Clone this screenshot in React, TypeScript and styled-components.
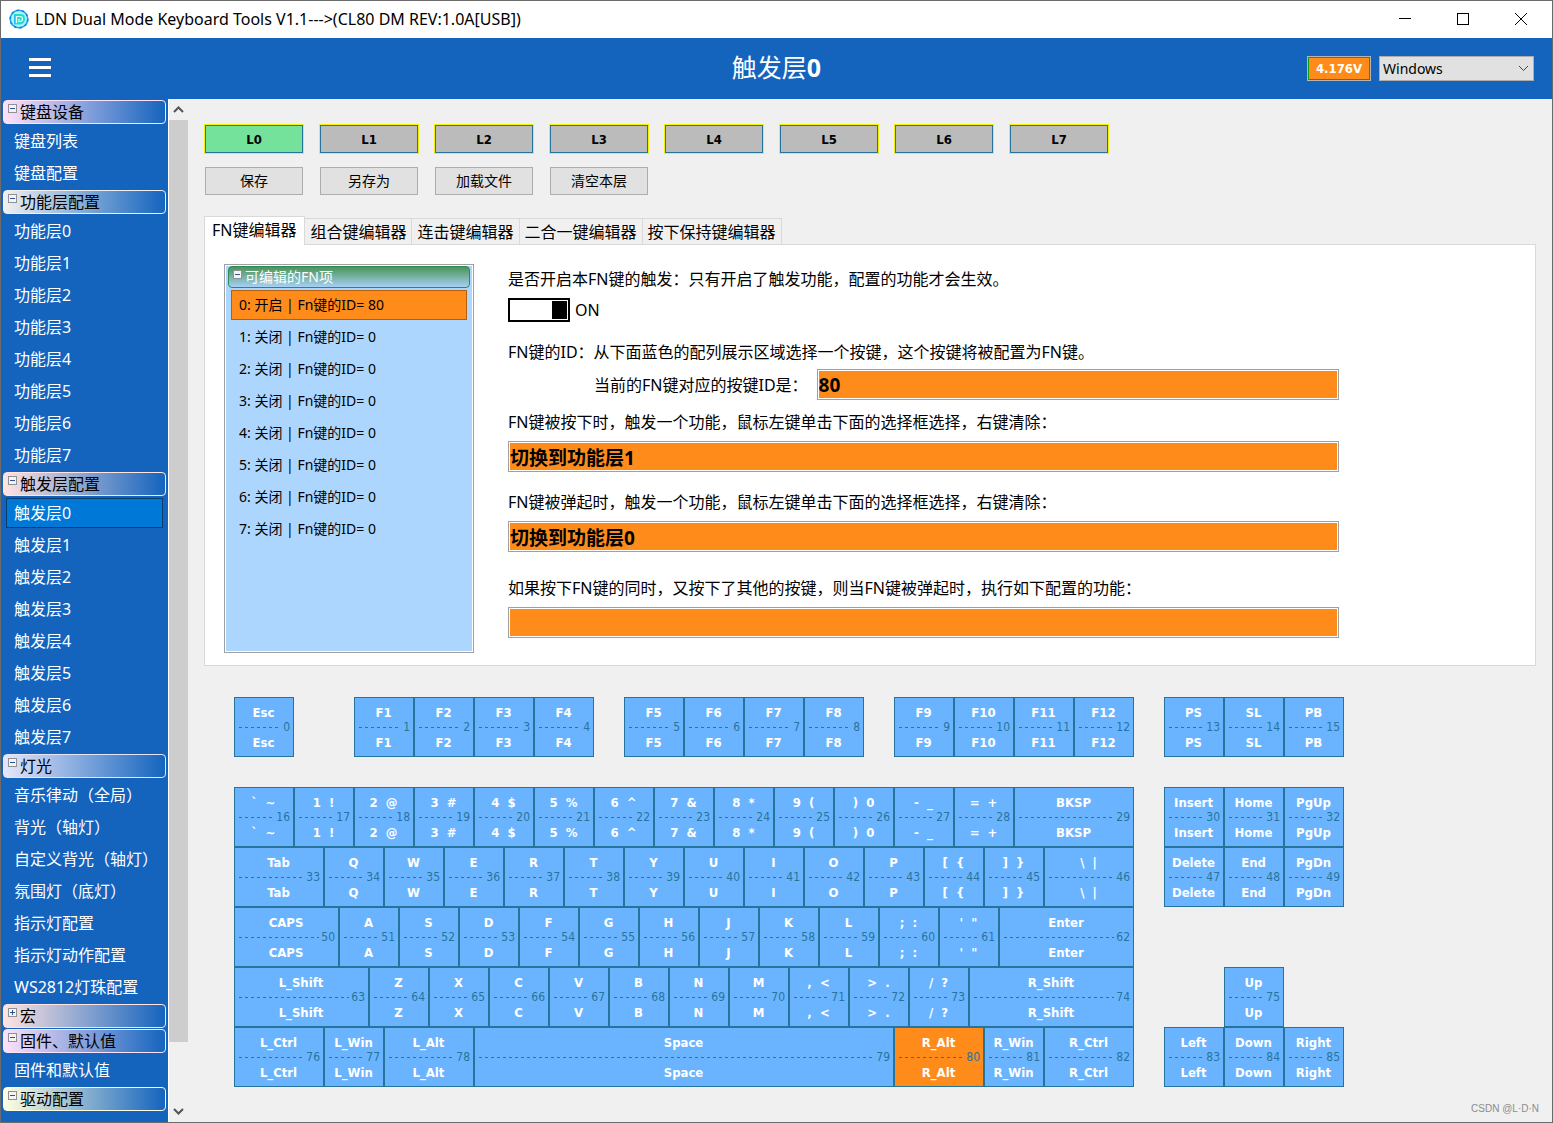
import React, { useState } from "react";
import styled, { createGlobalStyle, css } from "styled-components";

const ui = `"Noto Sans", "Noto Sans CJK SC", sans-serif`;
const compact = `"DejaVu Sans Condensed", "Noto Sans CJK SC", sans-serif`;
const blue = "#1464be";
const orange = "#ff8c1a";
const keyLine = "#26749b";

const Global = createGlobalStyle`
  *, *::before, *::after { box-sizing: border-box; }
  body { margin: 0; background: #f0f0f0; font-family: ${ui}; font-size: 16px; color: #000; }
  button, input, select { font: inherit; color: inherit; margin: 0; border-radius: 0; }
  button { padding: 0; }
`;

const Window = styled.div`
  display: flex;
  flex-direction: column;
  height: 100vh;
  border: 1px solid #6b6b6b;
  background: #f0f0f0;
  overflow: hidden;
`;

const TitleBar = styled.header`
  display: flex;
  align-items: center;
  flex: none;
  height: 37px;
  padding: 0 2px 2px 8px;
  gap: 6px;
  background: #fff;
`;

const Caption = styled.span`
  flex: 1;
  white-space: nowrap;
`;

const WindowButtons = styled.div`
  display: flex;
`;

const WindowButton = styled.button`
  display: grid;
  place-items: center;
  width: 58px;
  height: 34px;
  border: 0;
  background: transparent;
`;

const Header = styled.div`
  display: grid;
  grid-template-columns: 1fr auto 1fr;
  align-items: center;
  flex: none;
  height: 61px;
  padding: 0 18px;
  background: ${blue};
  color: #fff;
`;

const MenuButton = styled.button`
  display: flex;
  flex-direction: column;
  justify-content: space-between;
  width: 22px;
  height: 19px;
  margin: 0 10px 2px;
  border: 0;
  background: transparent;
`;

const MenuBar = styled.span`
  width: 100%;
  height: 3px;
  background: #fff;
`;

const PageTitle = styled.h1`
  margin: 0;
  padding-bottom: 4px;
  font-size: 25px;
  line-height: 32px;
  font-weight: normal;
`;

const HeaderTools = styled.div`
  display: flex;
  justify-content: flex-end;
  gap: 8px;
`;

const Voltage = styled.output`
  display: grid;
  place-items: center;
  width: 64px;
  height: 25px;
  border: 1px solid #b4b4b4;
  box-shadow: inset 0 0 0 1px #12a012;
  background: ${orange};
  font: bold 13px ${compact};
`;

const SelectWrap = styled.div`
  display: grid;
  align-items: center;
  width: 155px;
  height: 25px;
  border: 1px solid #adadad;
  background: #e1e1e1;
  color: #000;

  & > * { grid-area: 1 / 1; }
  svg { justify-self: end; margin-right: 4px; pointer-events: none; }
`;

const SystemSelect = styled.select`
  appearance: none;
  width: 100%;
  height: 100%;
  padding: 0 20px 0 3px;
  border: 0;
  background: transparent;
  font-size: 14px;
`;

const Body = styled.div`
  display: flex;
  flex: 1;
  min-height: 0;
`;

const Sidebar = styled.nav`
  flex: none;
  width: 167px;
  padding: 1px 2px 0 2px;
  background: ${blue};
  overflow: hidden;
`;

const GroupButton = styled.button<{ $tint: string }>`
  display: flex;
  align-items: flex-start;
  gap: 3px;
  width: 100%;
  height: 24px;
  margin-bottom: 1px;
  padding: 3px 0 0 4px;
  border: 1px solid ${(p) => p.$tint};
  border-radius: 4px;
  background: linear-gradient(90deg, ${(p) => p.$tint}, ${blue});
  line-height: 16px;
  white-space: nowrap;
`;

const GroupItems = styled.div`
  display: flex;
  flex-direction: column;
  gap: 2px;
  padding: 1px 3px 2px;
`;

const SideItem = styled.button<{ $active: boolean }>`
  height: 30px;
  padding: 0 7px;
  border: 1px solid transparent;
  background: transparent;
  color: #fff;
  line-height: 28px;
  text-align: left;
  white-space: nowrap;
  ${(p) => p.$active && css`
    border-color: #0b3c6e;
    background: #0078d7;
  `}
`;

const ScrollBar = styled.div`
  display: flex;
  flex-direction: column;
  align-items: center;
  flex: none;
  width: 20px;
  border-left: 1px solid #fff;
`;

const ScrollArrow = styled.button`
  display: grid;
  place-items: center;
  width: 100%;
  height: 21px;
  border: 0;
  background: transparent;
`;

const ScrollTrack = styled.div`
  display: grid;
  grid-template-rows: 94fr 6fr;
  flex: 1;
  width: 100%;
`;

const ScrollThumb = styled.div`
  background: #cdcdcd;
`;

const Content = styled.main`
  display: flex;
  flex-direction: column;
  flex: 1;
  min-width: 0;
  padding: 25px 16px 0;
`;

const LayerRow = styled.div`
  display: flex;
  gap: 15px;
`;

const LayerButton = styled.button<{ $active: boolean }>`
  width: 100px;
  height: 30px;
  border: 1px solid #f2f200;
  box-shadow: inset 0 0 0 1px ${keyLine};
  background: ${(p) => (p.$active ? "#75e29b" : "#bbbbbb")};
  font: bold 13px ${compact};
`;

const FileRow = styled.div`
  display: flex;
  gap: 17px;
  padding: 13px 1px 21px;
`;

const FileButton = styled.button`
  width: 98px;
  height: 28px;
  border: 1px solid #adadad;
  background: #e1e1e1;
  font-size: 14px;
  line-height: 24px;
`;

const Tabs = styled.div`
  display: flex;
  align-items: flex-end;
`;

const Tab = styled.button<{ $active: boolean }>`
  height: 26px;
  padding: 0 5px;
  border: 1px solid #d9d9d9;
  border-width: 1px 1px 0 0;
  background: #f0f0f0;
  line-height: 24px;
  white-space: nowrap;
  ${(p) => p.$active && css`
    height: 29px;
    margin-bottom: -1px;
    padding: 0 8px 2px 7px;
    border-left-width: 1px;
    background: #fff;
    z-index: 1;
  `}
`;

const Panel = styled.section`
  display: flex;
  gap: 34px;
  min-height: 422px;
  padding: 19px 19px 12px;
  border: 1px solid #d9d9d9;
  background: #fff;
`;

const FnList = styled.div`
  flex: none;
  width: 250px;
  padding: 1px 3px;
  border: 1px solid #a0a0a0;
  box-shadow: inset 0 0 0 1px #fff;
  background: #add6ff;
  font-size: 14px;
`;

const FnGroup = styled.button`
  display: flex;
  align-items: flex-start;
  gap: 3px;
  width: 100%;
  height: 22px;
  padding: 3px 4px;
  border: 1px solid #2e8b57;
  border-radius: 4px;
  background: linear-gradient(#4c9459, #a6d0f4);
  color: #fff;
  line-height: 14px;
`;

const FnItems = styled.div`
  display: flex;
  flex-direction: column;
  gap: 2px;
  padding: 2px 3px;
`;

const FnItem = styled.button<{ $active: boolean }>`
  height: 30px;
  padding: 0 7px;
  border: 1px solid transparent;
  background: transparent;
  line-height: 26px;
  text-align: left;
  ${(p) => p.$active && css`
    border-color: #b45f0c;
    background: ${orange};
  `}
`;

const Form = styled.div`
  flex: 0 1 831px;
  min-width: 0;
  padding-top: 3px;
  line-height: 24px;
`;

const Note = styled.p`
  margin: 0;
  white-space: nowrap;
`;

const Field = styled.div`
  display: flex;
  flex-direction: column;
  gap: 7px;
  margin-bottom: 18px;
  &:last-child { margin: 24px 0 0; }
`;

const InlineField = styled.div`
  display: flex;
  align-items: center;
  gap: 9px;
  margin: 5px 0 10px;
  padding-left: 86px;
`;

const FieldLabel = styled.label`
  white-space: nowrap;
`;

const ValueBox = styled.input`
  flex: 1 1 auto;
  min-width: 0;
  width: 100%;
  height: 31px;
  padding: 0 1px;
  border: 1px solid #a0a0a0;
  box-shadow: inset 0 0 0 1px #fff;
  background: ${orange};
  font-size: 19px;
  font-weight: bold;
`;

const SwitchLabel = styled.label`
  display: flex;
  align-items: center;
  gap: 5px;
  margin: 7px 0 18px;
`;

const Switch = styled.input`
  appearance: none;
  width: 62px;
  height: 24px;
  border: 2px solid #000;
  background: linear-gradient(#000, #000) left 1px center / 15px 18px no-repeat #fff;
  &:checked { background-position: right 1px center; }
`;

const Keyboard = styled.div`
  display: flex;
  flex-direction: column;
  padding: 31px 30px 0;
`;

const KeyRow = styled.div`
  display: flex;
  &:first-child { margin-bottom: 30px; }
`;

const Gap = styled.span<{ $units: number }>`
  flex: none;
  width: ${(p) => p.$units * 15}px;
`;

const KeyCap = styled.button<{ $units: number; $active: boolean }>`
  display: grid;
  grid-template-rows: repeat(3, 15px);
  flex: none;
  width: ${(p) => p.$units * 15}px;
  height: 60px;
  padding: 7px 3px 0 2px;
  border: 1px solid ${keyLine};
  background: ${(p) => (p.$active ? orange : "#6ab4ff")};
  color: #fff;
  font: bold 13px/15px ${compact};
`;

const KeyLabel = styled.span`
  white-space: pre;
`;

const KeyMiddle = styled.span`
  display: flex;
  align-items: center;
  gap: 2px;
  padding-left: 2px;
  color: ${keyLine};
  font-size: 12px;
  font-weight: normal;
`;

const Dashes = styled.span`
  flex: 1;
  height: 1px;
  background: repeating-linear-gradient(90deg, ${keyLine} 0 3px, transparent 3px 6px);
`;

const Footer = styled.footer`
  margin: auto -3px 0 0;
  padding-bottom: 6px;
  color: #8c8c8c;
  font: 10px/14px "Liberation Sans", sans-serif;
  text-align: right;
`;

const ExpandBox = ({ open }: { open: boolean }) => (
  <svg width="9" height="9" viewBox="0 0 9 9" shapeRendering="crispEdges">
    <rect x=".5" y=".5" width="8" height="8" fill="#f4f4f4" stroke="#919191" />
    <path d={open ? "M2 4.5h5" : "M2 4.5h5M4.5 2v5"} stroke="#3150a0" />
  </svg>
);

const AppIcon = () => (
  <svg width="20" height="20" viewBox="0 0 20 20" fill="none">
    <circle cx="10" cy="10" r="8.8" fill="#b4f2f5" stroke="#22a4ee" strokeWidth="1.6" />
    <circle cx="10" cy="10" r="8.8" stroke="#0f86f5" strokeWidth="1.6" strokeDasharray="2.5 3" />
    <path d="M5 5h7q4 0 4 5t-5 5.500H5z" fill="#22e0c8" />
    <path d="M7.500 14V7.500H11q2.500 0 2.500 2.500T11 12.500h-1V10" stroke="#e6fffb" strokeWidth="1.2" />
    <path d="M5.500 6v9" stroke="#27bdf0" />
  </svg>
);

const range = (n: number) => Array.from({ length: n }, (_, i) => i);

const groups = [
  { name: "键盘设备", tint: "#ffe1fa", open: true, items: ["键盘列表", "键盘配置"] },
  { name: "功能层配置", tint: "#f0f0f0", open: true, items: range(8).map((i) => `功能层${i}`) },
  { name: "触发层配置", tint: "#ffe4e1", open: true, items: range(8).map((i) => `触发层${i}`) },
  {
    name: "灯光", tint: "#e6e6fa", open: true,
    items: ["音乐律动（全局）", "背光（轴灯）", "自定义背光（轴灯）", "氛围灯（底灯）", "指示灯配置", "指示灯动作配置", "WS2812灯珠配置"],
  },
  { name: "宏", tint: "#ffe4e1", open: false, items: [] },
  { name: "固件、默认值", tint: "#ffe1fa", open: true, items: ["固件和默认值"] },
  { name: "驱动配置", tint: "#ffffe0", open: true, items: [] },
];

type Cell = string | number | [string, number];

// A number is a gap, a pair is a label with its width; a plain label is four units wide.
const layout: Cell[][] = [
  ["Esc", 4, "F1", "F2", "F3", "F4", 2, "F5", "F6", "F7", "F8", 2, "F9", "F10", "F11", "F12", 2, "PS", "SL", "PB"],
  ["`  ~", "1  !", "2  @", "3  #", "4  $", "5  %", "6  ^", "7  &", "8  *", "9  (", ")  0", "-  _", "=  +", ["BKSP", 8], 2, "Insert", "Home", "PgUp"],
  [["Tab", 6], "Q", "W", "E", "R", "T", "Y", "U", "I", "O", "P", "[  {", "]  }", ["\\  |", 6], 2, "Delete", "End", "PgDn"],
  [["CAPS", 7], "A", "S", "D", "F", "G", "H", "J", "K", "L", ";  :", "'  \"", ["Enter", 9]],
  [["L_Shift", 9], "Z", "X", "C", "V", "B", "N", "M", ",  <", ">  .", "/  ?", ["R_Shift", 11], 6, "Up"],
  [["L_Ctrl", 6], "L_Win", ["L_Alt", 6], ["Space", 28], ["R_Alt", 6], "R_Win", ["R_Ctrl", 6], 2, "Left", "Down", "Right"],
];

let nextId = 0;
const keyRows = layout.map((row) =>
  row.map((cell) => {
    if (typeof cell === "number") return { id: -1, label: "", units: cell };
    const [label, units] = typeof cell === "string" ? [cell, 4] : cell;
    return { id: nextId++, label, units };
  }),
);

const tabs = ["FN键编辑器", "组合键编辑器", "连击键编辑器", "二合一键编辑器", "按下保持键编辑器"];

export default function App() {
  const [page, setPage] = useState("触发层0");
  const [layer, setLayer] = useState(0);
  const [tab, setTab] = useState(0);
  const [fn, setFn] = useState(0);
  const [on, setOn] = useState(true);
  const [keyId, setKeyId] = useState(80);

  return (
    <Window>
      <Global />
      <TitleBar>
        <AppIcon />
        <Caption>LDN Dual Mode Keyboard Tools V1.1---&gt;(CL80 DM REV:1.0A[USB])</Caption>
        <WindowButtons>
          <WindowButton aria-label="最小化">
            <svg width="12" height="12" shapeRendering="crispEdges"><path d="M0 5.5h12" stroke="#000" /></svg>
          </WindowButton>
          <WindowButton aria-label="最大化">
            <svg width="12" height="12" shapeRendering="crispEdges"><path d="M.5.5h11v11H.5z" stroke="#000" fill="none" /></svg>
          </WindowButton>
          <WindowButton aria-label="关闭">
            <svg width="12" height="12"><path d="M0 0l12 12M12 0L0 12" stroke="#000" /></svg>
          </WindowButton>
        </WindowButtons>
      </TitleBar>

      <Header>
        <MenuButton aria-label="菜单"><MenuBar /><MenuBar /><MenuBar /></MenuButton>
        <PageTitle>{page.slice(0, -1)}<b>{page.slice(-1)}</b></PageTitle>
        <HeaderTools>
          <Voltage>4.176V</Voltage>
          <SelectWrap>
            <SystemSelect aria-label="系统" defaultValue="Windows">
              <option>Windows</option>
              <option>Mac</option>
            </SystemSelect>
            <svg width="11" height="7" fill="none"><path d="M1 1l4.500 4.500L10 1" stroke="#444" /></svg>
          </SelectWrap>
        </HeaderTools>
      </Header>

      <Body>
        <Sidebar>
          {groups.map((g) => (
            <React.Fragment key={g.name}>
              <GroupButton $tint={g.tint}><ExpandBox open={g.open} />{g.name}</GroupButton>
              {g.items.length > 0 && (
                <GroupItems>
                  {g.items.map((name) => (
                    <SideItem key={name} $active={name === page} onClick={() => setPage(name)}>{name}</SideItem>
                  ))}
                </GroupItems>
              )}
            </React.Fragment>
          ))}
        </Sidebar>
        <ScrollBar>
          <ScrollArrow aria-label="向上滚动">
            <svg width="11" height="7" fill="none"><path d="M1 6l4.500-4.500L10 6" stroke="#555" strokeWidth="2" /></svg>
          </ScrollArrow>
          <ScrollTrack><ScrollThumb /></ScrollTrack>
          <ScrollArrow aria-label="向下滚动">
            <svg width="11" height="7" fill="none"><path d="M1 1l4.500 4.500L10 1" stroke="#555" strokeWidth="2" /></svg>
          </ScrollArrow>
        </ScrollBar>

        <Content>
          <LayerRow>
            {range(8).map((i) => (
              <LayerButton key={i} $active={i === layer} onClick={() => setLayer(i)}>L{i}</LayerButton>
            ))}
          </LayerRow>
          <FileRow>
            {["保存", "另存为", "加载文件", "清空本层"].map((name) => <FileButton key={name}>{name}</FileButton>)}
          </FileRow>

          <Tabs role="tablist">
            {tabs.map((name, i) => (
              <Tab key={name} role="tab" aria-selected={i === tab} $active={i === tab} onClick={() => setTab(i)}>{name}</Tab>
            ))}
          </Tabs>
          <Panel role="tabpanel">
            <FnList>
              <FnGroup><ExpandBox open />可编辑的FN项</FnGroup>
              <FnItems>
                {range(8).map((i) => (
                  <FnItem key={i} $active={i === fn} onClick={() => setFn(i)}>
                    {i}: {i === 0 ? "开启" : "关闭"} | Fn键的ID= {i === 0 ? keyId : 0}
                  </FnItem>
                ))}
              </FnItems>
            </FnList>
            <Form>
              <Note>是否开启本FN键的触发：只有开启了触发功能，配置的功能才会生效。</Note>
              <SwitchLabel>
                <Switch type="checkbox" role="switch" checked={on} onChange={() => setOn(!on)} />
                {on ? "ON" : "OFF"}
              </SwitchLabel>
              <Note>FN键的ID：从下面蓝色的配列展示区域选择一个按键，这个按键将被配置为FN键。</Note>
              <InlineField>
                <FieldLabel htmlFor="key-id">当前的FN键对应的按键ID是：</FieldLabel>
                <ValueBox id="key-id" readOnly value={keyId} />
              </InlineField>
              <Field>
                <FieldLabel htmlFor="on-press">FN键被按下时，触发一个功能，鼠标左键单击下面的选择框选择，右键清除：</FieldLabel>
                <ValueBox id="on-press" readOnly value="切换到功能层1" />
              </Field>
              <Field>
                <FieldLabel htmlFor="on-release">FN键被弹起时，触发一个功能，鼠标左键单击下面的选择框选择，右键清除：</FieldLabel>
                <ValueBox id="on-release" readOnly value="切换到功能层0" />
              </Field>
              <Field>
                <FieldLabel htmlFor="on-combo">如果按下FN键的同时，又按下了其他的按键，则当FN键被弹起时，执行如下配置的功能：</FieldLabel>
                <ValueBox id="on-combo" readOnly value="" />
              </Field>
            </Form>
          </Panel>

          <Keyboard>
            {keyRows.map((row, r) => (
              <KeyRow key={r}>
                {row.map((k, i) =>
                  k.id < 0 ? (
                    <Gap key={i} $units={k.units} />
                  ) : (
                    <KeyCap key={i} $units={k.units} $active={k.id === keyId} onClick={() => setKeyId(k.id)}>
                      <KeyLabel>{k.label}</KeyLabel>
                      <KeyMiddle><Dashes />{k.id}</KeyMiddle>
                      <KeyLabel>{k.label}</KeyLabel>
                    </KeyCap>
                  ),
                )}
              </KeyRow>
            ))}
          </Keyboard>
          <Footer>CSDN @L·D·N</Footer>
        </Content>
      </Body>
    </Window>
  );
}
